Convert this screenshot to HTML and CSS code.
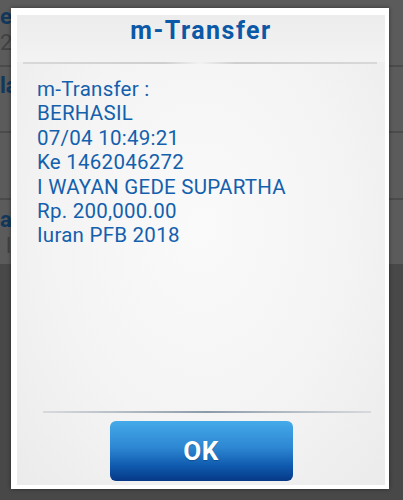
FILE: index.html
```html
<!DOCTYPE html>
<html>
<head>
<meta charset="utf-8">
<link rel="stylesheet" href="styles.css">
</head>
<body>
<div class="screen">
  <div class="list">
    <div class="row row-1">
      <div class="row-title">e</div>
      <div class="row-sub">20</div>
    </div>
    <div class="row row-2">
      <div class="row-title">la</div>
    </div>
    <div class="row row-3"></div>
    <div class="row row-4">
      <div class="row-title">a</div>
      <div class="row-sub">l</div>
    </div>
    <div class="lower"></div>
  </div>

  <div class="dialog">
    <div class="panel">
      <div class="header">
        <h1 class="title">m-Transfer</h1>
      </div>
      <div class="sep-top"></div>
      <div class="message">
        <div>m-Transfer :</div>
        <div>BERHASIL</div>
        <div>07/04 10:49:21</div>
        <div>Ke 1462046272</div>
        <div>I WAYAN GEDE SUPARTHA</div>
        <div>Rp. 200,000.00</div>
        <div>Iuran PFB 2018</div>
      </div>
      <div class="sep-bottom"></div>
      <div class="footer">
        <button class="ok">OK</button>
      </div>
    </div>
  </div>
</div>
</body>
</html>
```

FILE: styles.css
```css
html, body {
  margin: 0;
  padding: 0;
}
body {
  width: 403px;
  height: 500px;
  overflow: hidden;
  background: #5b5b5b;
  font-family: Roboto, "Liberation Sans", sans-serif;
}
.screen {
  position: relative;
  width: 403px;
  height: 500px;
}
.list {
  display: flex;
  flex-direction: column;
  height: 500px;
}
.row {
  border-bottom: 2px solid #4b4b4b;
  box-sizing: border-box;
}
.row-1 { height: 67px; padding-top: 4px; }
.row-2 { height: 66px; padding-top: 6px; }
.row-3 { height: 67px; }
.row-4 { height: 64px; padding-top: 7px; border-bottom: none; }
.row-title {
  font-weight: 700;
  font-size: 22px;
  line-height: 26px;
  color: #12375c;
}
.row-sub {
  font-size: 22px;
  line-height: 26px;
  color: #424242;
}
.row-4 .row-sub { padding-left: 6px; }
.lower {
  flex: 1;
  background: #484848;
}

.dialog {
  position: absolute;
  left: 11px;
  top: 8px;
  width: 378px;
  height: 481px;
  box-sizing: border-box;
  padding: 7px 4px 4px 6px;
  background: #ffffff;
  box-shadow: 0 0 4px rgba(0, 0, 0, 0.45);
}
.panel {
  height: 100%;
  display: flex;
  flex-direction: column;
  background: radial-gradient(ellipse at 50% 45%, #fafafa 0%, #f4f4f4 55%, #ebebeb 100%);
}
.header {
  padding-top: 1px;
  padding-bottom: 16px;
  background: linear-gradient(#ececec, #f3f3f3);
}
.title {
  margin: 0;
  text-align: center;
  font-size: 25px;
  line-height: 30px;
  font-weight: 700;
  color: #0b58a6;
  letter-spacing: 1.5px;
}
.sep-top {
  height: 2px;
  margin: 0 8px 0 6px;
  background: linear-gradient(90deg, #d8d8d8 0%, #cfcfcf 40%, #f2f2f2 50%, #cfcfcf 60%, #d8d8d8 100%);
}
.message {
  flex: 1;
  padding: 13px 0 0 20px;
  font-size: 20.5px;
  line-height: 24.4px;
  letter-spacing: 0.25px;
  color: #1360ad;
}
.sep-bottom {
  height: 2px;
  margin: 0 14px 0 26px;
  background: linear-gradient(90deg, rgba(160,170,180,0.3) 0%, #8b9aa9 50%, rgba(160,170,180,0.3) 100%);
}
.footer {
  display: flex;
  justify-content: center;
  padding: 8px 0 4px;
}
.ok {
  width: 183px;
  height: 60px;
  border: none;
  border-radius: 6px;
  background: linear-gradient(#44aae9 0%, #2d86d2 45%, #0f5aae 75%, #063886 100%);
  color: #ffffff;
  font-family: Roboto, "Liberation Sans", sans-serif;
  font-weight: 700;
  font-size: 26px;
  letter-spacing: 0.5px;
  padding: 0;
  text-shadow: 0 1px 1px rgba(0, 0, 0, 0.25);
}
```
